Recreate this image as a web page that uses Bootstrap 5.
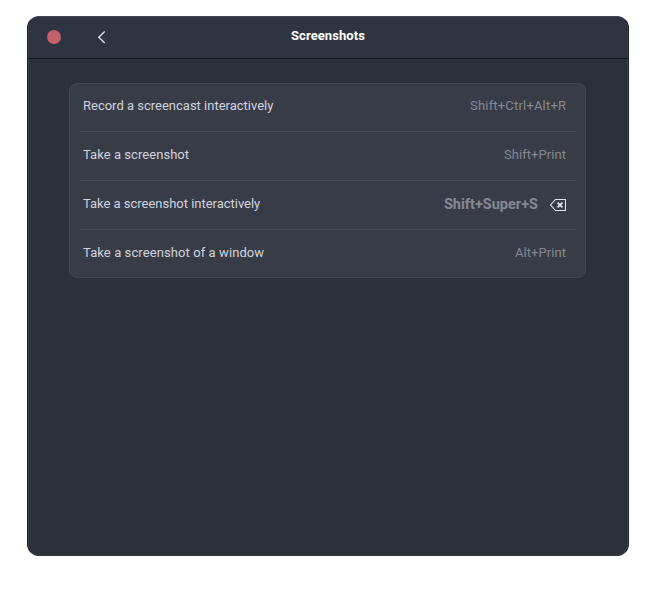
<!DOCTYPE html>
<html lang="en"><head><meta charset="utf-8"><title>Screenshots</title>
<link rel="stylesheet" href="https://cdn.jsdelivr.net/npm/bootstrap@5.3.0/dist/css/bootstrap.min.css">
<style>
body{font-family:Roboto,sans-serif;font-size:13px;line-height:20px;color:#d0d4de;background:#fff}
.app-window{width:602px;height:540px;margin:16px 0 0 27px;background:#2c303a;border:1px solid #1b1d23;border-top-color:#414a55;border-bottom-color:#343842;border-radius:12px;box-shadow:inset 1px 0 0 #40434d,inset -1px 0 0 #40434d}
.titlebar{height:42px;padding:0 19px 2px;background:#2f3540;border-bottom:1px solid #101217;box-shadow:inset 1px 0 0 #39404c,inset -1px 0 0 #39404c}
.titlebar-side{width:200px}
.close-dot{width:14px;height:14px;background:#c4606c}
.back-icon{margin-left:36px}
.window-title{font-size:13px;letter-spacing:.08px;color:#fff;padding-bottom:2px}
.shortcuts{width:517px;margin:24px 0 0 41px;background:#383c47;border:1px solid #444853;border-radius:8px;padding:0 9px 0 10px}
.shortcut{height:49px;padding:0 10px 2px 3px;border-bottom:1px solid #464a55}
.shortcut:first-child{height:48px;padding-bottom:4px}
.shortcut:last-child{height:47px;padding-bottom:2px;border:0}
.keys{color:#858993;letter-spacing:.06px;margin-right:-.06px}
.keys-long{letter-spacing:.19px;margin-right:-.19px}
.custom-keys{font-size:14.5px;font-weight:700;letter-spacing:0;margin-right:12px;padding-top:2px}
.name-tight{letter-spacing:-.02px}
.name-mid{letter-spacing:.05px}
.name-wide{letter-spacing:.09px}
.clear-icon{margin-top:2px}
</style></head><body>
<main class="app-window overflow-hidden">
<header class="titlebar d-flex align-items-center justify-content-between">
<div class="titlebar-side d-flex align-items-center">
<span class="close-dot rounded-circle"></span>
<svg class="back-icon" width="10" height="14" fill="none" stroke="#e2e7ee" stroke-width="1.3" aria-label="Back"><path d="M7.7 1.5 1.8 7.2 7.7 13"/></svg>
</div>
<h1 class="window-title fw-bold mb-0">Screenshots</h1>
<div class="titlebar-side"></div>
</header>
<section class="shortcuts">
<div class="shortcut d-flex align-items-center justify-content-between"><span>Record a screencast interactively</span><span class="keys keys-long">Shift+Ctrl+Alt+R</span></div>
<div class="shortcut d-flex align-items-center justify-content-between"><span class="name-mid">Take a screenshot</span><span class="keys">Shift+Print</span></div>
<div class="shortcut d-flex align-items-center justify-content-between"><span class="name-tight">Take a screenshot interactively</span>
<div class="d-flex align-items-center"><span class="keys custom-keys">Shift+Super+S</span>
<svg class="clear-icon" width="16" height="12" fill="none" stroke="#dce1ea" stroke-width="1.1" aria-label="Reset shortcut"><path d="M5.5.5H15.5V11.5H5.5L.6 6Z"/><path stroke-width="1.8" d="M7.6 3.6 12.4 8.4M12.4 3.6 7.6 8.4"/></svg></div></div>
<div class="shortcut d-flex align-items-center justify-content-between"><span class="name-wide">Take a screenshot of a window</span><span class="keys">Alt+Print</span></div>
</section>
</main>
<script src="https://cdn.jsdelivr.net/npm/bootstrap@5.3.0/dist/js/bootstrap.bundle.min.js"></script>
</body></html>
